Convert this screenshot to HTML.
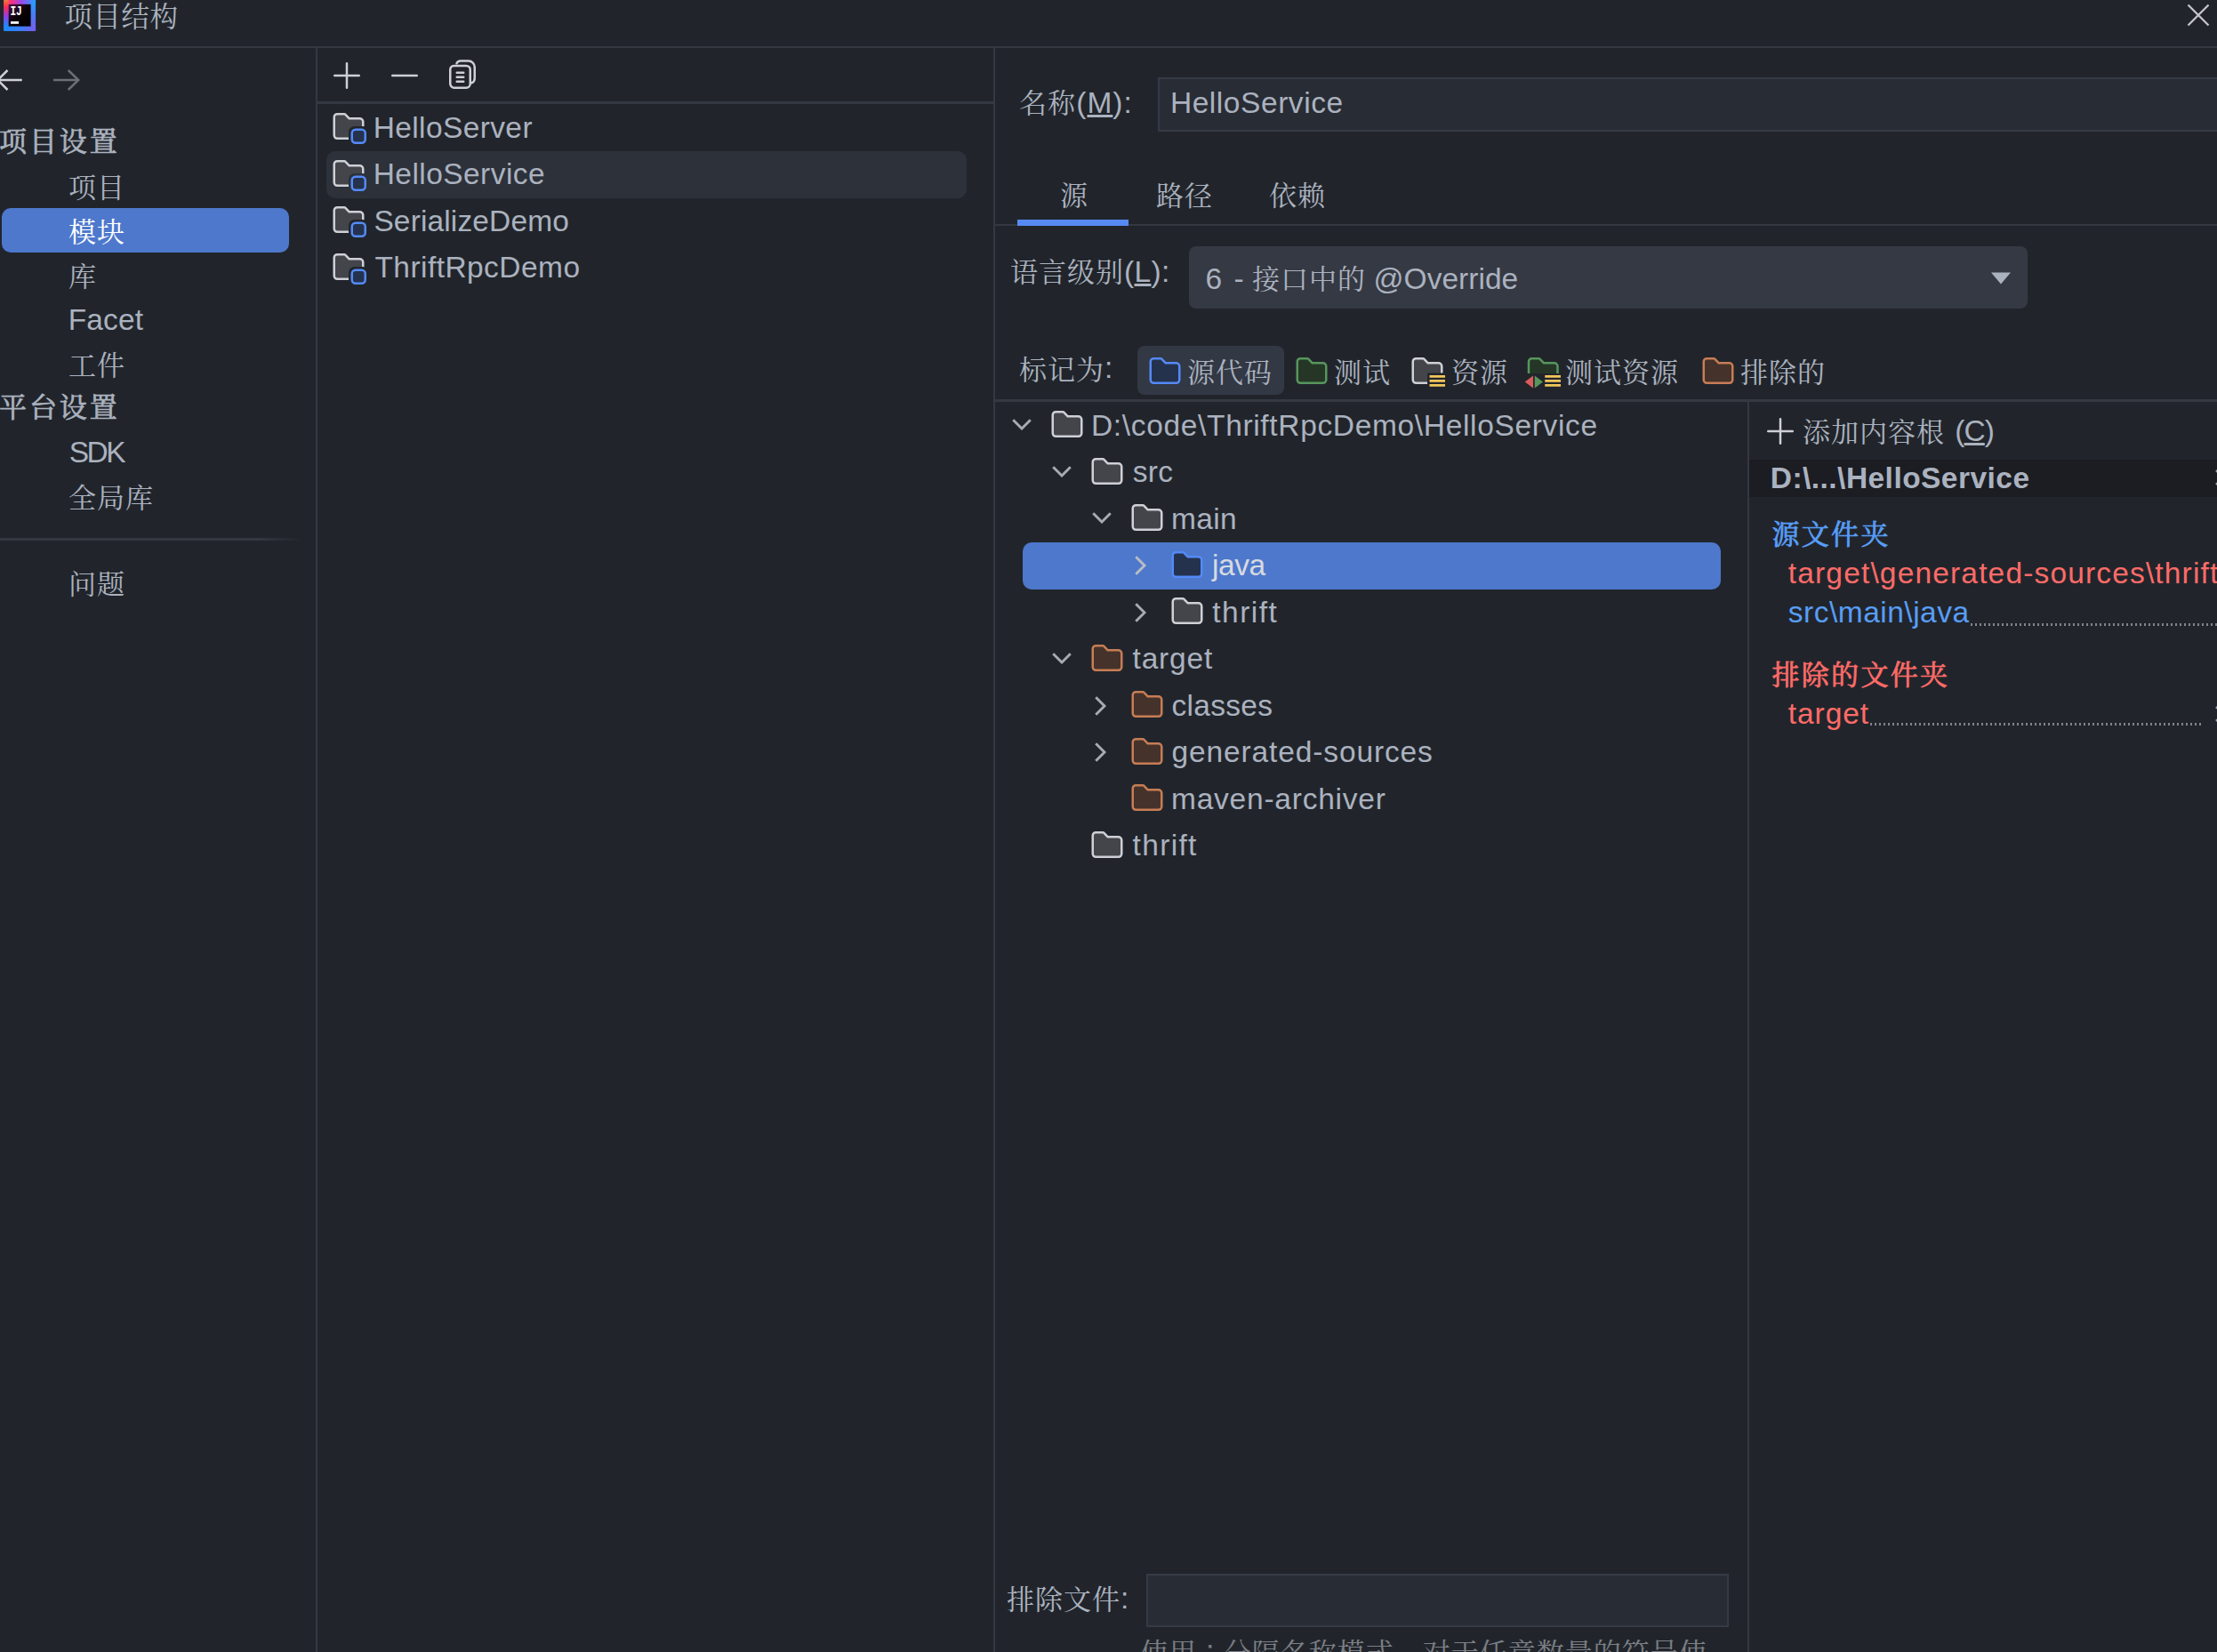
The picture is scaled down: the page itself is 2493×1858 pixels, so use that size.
<!DOCTYPE html>
<html lang="zh-CN"><head><meta charset="utf-8"><title>项目结构</title>
<style>
html,body{margin:0;padding:0}
body{width:2493px;height:1858px;overflow:hidden;background:#21252B;color:#ABB2BF;position:relative;
 font-family:"Liberation Sans","Noto Serif CJK SC",sans-serif;font-size:32px;}
.ic{position:absolute;overflow:visible}
.t{position:absolute;white-space:pre;line-height:40px;height:40px}
.zh{font-size:31px;letter-spacing:1px;position:relative;top:1.5px}
.fb{-webkit-text-stroke:0.75px currentColor;letter-spacing:2.3px}
.sh .fb{letter-spacing:2.9px}
.en{font-size:33.5px}
.b{font-weight:bold}
.r{position:absolute}
.hl{position:absolute;background:#333841}
u{text-decoration-thickness:2.6px;text-underline-offset:2.4px}
</style></head><body>

<div class="hl" style="left:0;top:52px;width:2493px;height:2px"></div>
<svg class="ic" style="left:4px;top:-1.3px" width="36.2" height="36" viewBox="0 0 36 36">
<defs>
<linearGradient id="gt" x1="0" y1="0" x2="1" y2="0"><stop offset="0" stop-color="#FDA40F"/><stop offset="0.22" stop-color="#FF2D7A"/><stop offset="0.55" stop-color="#9A48EA"/><stop offset="1" stop-color="#1FA6FF"/></linearGradient>
<linearGradient id="gl" x1="0" y1="0" x2="0" y2="1"><stop offset="0" stop-color="#FC801D"/><stop offset="0.25" stop-color="#FE2857"/><stop offset="0.55" stop-color="#8A42E8"/><stop offset="0.85" stop-color="#1A8CFF"/></linearGradient>
<linearGradient id="gb" x1="0" y1="0" x2="1" y2="0"><stop offset="0" stop-color="#1A8CFF"/><stop offset="0.55" stop-color="#3D7CF5"/><stop offset="1" stop-color="#7B5CF0"/></linearGradient>
<linearGradient id="gr" x1="0" y1="0" x2="0" y2="1"><stop offset="0" stop-color="#1FA6FF"/><stop offset="0.5" stop-color="#4A7BF5"/><stop offset="1" stop-color="#7B5CF0"/></linearGradient>
<linearGradient id="gi" x1="0" y1="0" x2="1" y2="1"><stop offset="0" stop-color="#4A0F45"/><stop offset="0.5" stop-color="#0A0208"/><stop offset="1" stop-color="#000"/></linearGradient>
</defs>
<rect x="0.3" y="0.3" width="35.4" height="35.4" fill="#5A5CE6"/>
<polygon points="0,0 36,0 30,6 6,6" fill="url(#gt)"/>
<polygon points="0,0 6,6 6,30 0,36" fill="url(#gl)"/>
<polygon points="0,36 6,30 30,30 36,36" fill="url(#gb)"/>
<polygon points="36,0 36,36 30,30 30,6" fill="url(#gr)"/>
<rect x="5.6" y="5.8" width="24.9" height="24.8" fill="url(#gi)"/>
<rect x="7.9" y="25.1" width="9.1" height="2.7" fill="#fff"/>
<text x="7.3" y="18.2" font-family="Liberation Mono, monospace" font-weight="bold" font-size="14.2" fill="#fff" textLength="13.4" lengthAdjust="spacingAndGlyphs">IJ</text>
</svg>
<div class="t" style="left:72.5px;top:-0.6px;font-size:31.5px;letter-spacing:0.5px">项目结构</div>
<svg class="ic" style="left:2456px;top:1px" width="32" height="32" viewBox="0 0 32 32"><path d="M4.5 4.5L27.5 27.5M27.5 4.5L4.5 27.5" stroke="#C3C5C9" stroke-width="2.3" fill="none"/></svg>
<div class="hl" style="left:354.6px;top:54px;width:2.6px;height:1804px"></div>
<svg class="ic" style="left:-9px;top:70px" width="40" height="40" viewBox="0 0 16 16"><path d="M13.5 8H2.7M7 3.6L2.6 8L7 12.4" fill="none" stroke="#CED0D6" stroke-width="1"/></svg>
<svg class="ic" style="left:56px;top:70px" width="40" height="40" viewBox="0 0 16 16"><path d="M1.6 8H12.8M8.3 3.6L12.9 8L8.3 12.4" fill="none" stroke="#6C6F75" stroke-width="1"/></svg>
<div class="t sh" style="left:-1px;top:137.5px"><span class="zh fb">项目设置</span></div>
<div class="t" style="left:77px;top:189.5px"><span class="zh">项目</span></div>
<div class="r" style="left:2px;top:234.0px;width:322.8px;height:50px;border-radius:10px;background:#4D78CC"></div>
<div class="t" style="left:77px;top:239.5px;color:#fff"><span class="zh">模块</span></div>
<div class="t" style="left:77px;top:289.5px"><span class="zh">库</span></div>
<div class="t" style="left:76.7px;top:339.5px"><span class="en" style="letter-spacing:0.131px">Facet</span></div>
<div class="t" style="left:77px;top:389.5px"><span class="zh">工件</span></div>
<div class="t sh" style="left:-1px;top:436px"><span class="zh fb">平台设置</span></div>
<div class="t" style="left:77.7px;top:488.5px"><span class="en" style="letter-spacing:-2.518px">SDK</span></div>
<div class="t" style="left:77px;top:538px"><span class="zh">全局库</span></div>
<div class="r" style="left:0;top:605px;width:340px;height:3px;background:linear-gradient(90deg,#333841 0,#333841 85%,#21252B 100%)"></div>
<div class="t" style="left:77px;top:635px"><span class="zh">问题</span></div>
<svg class="ic" style="left:370px;top:65px" width="40" height="40" viewBox="0 0 16 16"><path d="M8 2.5V13.5M2.5 8H13.5" stroke="#CED0D6" stroke-width="1" stroke-linecap="round" fill="none"/></svg>
<svg class="ic" style="left:435px;top:65px" width="40" height="40" viewBox="0 0 16 16"><path d="M2.5 8H13.5" stroke="#CED0D6" stroke-width="1" stroke-linecap="round" fill="none"/></svg>
<svg class="ic" style="left:500px;top:64px" width="40" height="40" viewBox="0 0 16 16" fill="none" stroke="#CED0D6" stroke-linecap="round">
<path d="M5.4 2.9C5.7 2.2 6.3 1.8 7.1 1.8H10.7A2.8 2.8 0 0 1 13.5 4.6V9.7A2.1 2.1 0 0 1 12.1 11.7"/>
<rect x="2.5" y="3.95" width="9" height="9.95" rx="1.8"/>
<path d="M5.5 7.05H8.5M5.5 9.05H8.5M5.5 11.05H8.5"/></svg>
<div class="hl" style="left:357px;top:114px;width:760.5px;height:3.2px"></div>
<div class="hl" style="left:1116.8px;top:54px;width:2.4px;height:1804px"></div>
<svg class="ic" style="left:371.7px;top:122.3px" width="40" height="40" viewBox="0 0 16 16" ><path d="M8.10584 4.34613L8.25344 4.5H8.46667H13C13.8284 4.5 14.5 5.17157 14.5 6V12.1333C14.5 12.9529 13.8359 13.5 13.1 13.5H2.9C2.16409 13.5 1.5 12.9529 1.5 12.1333V3.86667C1.5 3.04707 2.16409 2.5 2.9 2.5H6.11923C6.25536 2.5 6.38561 2.55548 6.47986 2.65374L8.10584 4.34613Z" fill="#43454A" stroke="#CED0D6"/><rect x="8" y="8" width="9" height="9" rx="2.6" fill="#21252B"/><rect x="9.5" y="9.5" width="6" height="6" rx="1.6" fill="#25324D" stroke="#548AF7"/></svg>
<div class="t" style="left:419.7px;top:123.5px"><span class="en" style="letter-spacing:0.385px">HelloServer</span></div>
<div class="r" style="left:367px;top:170.0px;width:720px;height:52.5px;border-radius:10px;background:#2C313A"></div>
<svg class="ic" style="left:371.7px;top:174.8px" width="40" height="40" viewBox="0 0 16 16" ><path d="M8.10584 4.34613L8.25344 4.5H8.46667H13C13.8284 4.5 14.5 5.17157 14.5 6V12.1333C14.5 12.9529 13.8359 13.5 13.1 13.5H2.9C2.16409 13.5 1.5 12.9529 1.5 12.1333V3.86667C1.5 3.04707 2.16409 2.5 2.9 2.5H6.11923C6.25536 2.5 6.38561 2.55548 6.47986 2.65374L8.10584 4.34613Z" fill="#43454A" stroke="#CED0D6"/><rect x="8" y="8" width="9" height="9" rx="2.6" fill="#2C313A"/><rect x="9.5" y="9.5" width="6" height="6" rx="1.6" fill="#25324D" stroke="#548AF7"/></svg>
<div class="t" style="left:419.7px;top:176.0px"><span class="en" style="letter-spacing:0.444px">HelloService</span></div>
<svg class="ic" style="left:371.7px;top:227.3px" width="40" height="40" viewBox="0 0 16 16" ><path d="M8.10584 4.34613L8.25344 4.5H8.46667H13C13.8284 4.5 14.5 5.17157 14.5 6V12.1333C14.5 12.9529 13.8359 13.5 13.1 13.5H2.9C2.16409 13.5 1.5 12.9529 1.5 12.1333V3.86667C1.5 3.04707 2.16409 2.5 2.9 2.5H6.11923C6.25536 2.5 6.38561 2.55548 6.47986 2.65374L8.10584 4.34613Z" fill="#43454A" stroke="#CED0D6"/><rect x="8" y="8" width="9" height="9" rx="2.6" fill="#21252B"/><rect x="9.5" y="9.5" width="6" height="6" rx="1.6" fill="#25324D" stroke="#548AF7"/></svg>
<div class="t" style="left:420.4px;top:228.5px"><span class="en" style="letter-spacing:0.133px">SerializeDemo</span></div>
<svg class="ic" style="left:371.7px;top:279.8px" width="40" height="40" viewBox="0 0 16 16" ><path d="M8.10584 4.34613L8.25344 4.5H8.46667H13C13.8284 4.5 14.5 5.17157 14.5 6V12.1333C14.5 12.9529 13.8359 13.5 13.1 13.5H2.9C2.16409 13.5 1.5 12.9529 1.5 12.1333V3.86667C1.5 3.04707 2.16409 2.5 2.9 2.5H6.11923C6.25536 2.5 6.38561 2.55548 6.47986 2.65374L8.10584 4.34613Z" fill="#43454A" stroke="#CED0D6"/><rect x="8" y="8" width="9" height="9" rx="2.6" fill="#21252B"/><rect x="9.5" y="9.5" width="6" height="6" rx="1.6" fill="#25324D" stroke="#548AF7"/></svg>
<div class="t" style="left:421.4px;top:281.0px"><span class="en" style="letter-spacing:0.449px">ThriftRpcDemo</span></div>
<div class="t" style="left:1146px;top:94px"><span class="zh">名称</span></div>
<div class="t" style="left:1210.3px;top:96px"><span class="en" style="letter-spacing:0.994px">(<u>M</u>):</span></div>
<div class="r" style="left:1302px;top:86.8px;width:1300px;height:57.2px;background:#282C34;border:2px solid #353A45"></div>
<div class="t" style="left:1315.9px;top:96px"><span class="en" style="letter-spacing:0.562px">HelloService</span></div>
<div class="t" style="left:1192px;top:198.5px"><span class="zh">源</span></div>
<div class="t" style="left:1300px;top:198.5px"><span class="zh">路径</span></div>
<div class="t" style="left:1427px;top:198.5px"><span class="zh">依赖</span></div>
<div class="hl" style="left:1119px;top:251.7px;width:1374px;height:2px"></div>
<div class="r" style="left:1144px;top:247px;width:125px;height:7px;background:#568AF2"></div>
<div class="t" style="left:1136px;top:284px"><span class="zh">语言级别</span></div>
<div class="t" style="left:1264px;top:286px"><span class="en" style="letter-spacing:0.352px">(<u>L</u>):</span></div>
<div class="r" style="left:1337px;top:276.8px;width:942.5px;height:70px;border-radius:8px;background:#353943"></div>
<div class="t" style="left:1355.6px;top:293.7px"><span class="en" style="letter-spacing:1.931px">6 -</span></div>
<div class="t" style="left:1408px;top:292.2px"><span class="zh">接口中的</span></div>
<div class="t" style="left:1544.6px;top:293.7px"><span class="en" style="letter-spacing:0.021px">@Override</span></div>
<svg class="ic" style="left:2238px;top:305px" width="24" height="16" viewBox="0 0 24 16"><path d="M1 1.5H23L12 14.5Z" fill="#ABB2BF"/></svg>
<div class="t" style="left:1146px;top:394px"><span class="zh">标记为</span><span class="en" style="letter-spacing:0.600px">:</span></div>
<div class="r" style="left:1279px;top:389px;width:165px;height:55px;border-radius:8px;background:#323844"></div>
<svg class="ic" style="left:1290px;top:397px" width="40" height="40" viewBox="0 0 16 16" ><path d="M8.10584 4.34613L8.25344 4.5H8.46667H13C13.8284 4.5 14.5 5.17157 14.5 6V12.1333C14.5 12.9529 13.8359 13.5 13.1 13.5H2.9C2.16409 13.5 1.5 12.9529 1.5 12.1333V3.86667C1.5 3.04707 2.16409 2.5 2.9 2.5H6.11923C6.25536 2.5 6.38561 2.55548 6.47986 2.65374L8.10584 4.34613Z" fill="#25324D" stroke="#548AF7"/></svg>
<div class="t" style="left:1335px;top:397.3px"><span class="zh">源代码</span></div>
<svg class="ic" style="left:1454.5px;top:397px" width="40" height="40" viewBox="0 0 16 16" ><path d="M8.10584 4.34613L8.25344 4.5H8.46667H13C13.8284 4.5 14.5 5.17157 14.5 6V12.1333C14.5 12.9529 13.8359 13.5 13.1 13.5H2.9C2.16409 13.5 1.5 12.9529 1.5 12.1333V3.86667C1.5 3.04707 2.16409 2.5 2.9 2.5H6.11923C6.25536 2.5 6.38561 2.55548 6.47986 2.65374L8.10584 4.34613Z" fill="#253627" stroke="#57965C"/></svg>
<div class="t" style="left:1500px;top:397.3px"><span class="zh">测试</span></div>
<svg class="ic" style="left:1584.5px;top:397px" width="40" height="40" viewBox="0 0 16 16" ><path d="M8.10584 4.34613L8.25344 4.5H8.46667H13C13.8284 4.5 14.5 5.17157 14.5 6V12.1333C14.5 12.9529 13.8359 13.5 13.1 13.5H2.9C2.16409 13.5 1.5 12.9529 1.5 12.1333V3.86667C1.5 3.04707 2.16409 2.5 2.9 2.5H6.11923C6.25536 2.5 6.38561 2.55548 6.47986 2.65374L8.10584 4.34613Z" fill="#43454A" stroke="#CED0D6"/><rect x="8" y="9" width="9" height="7" fill="#21252B"/><path d="M9 10.5H16M9 12.5H16M9 14.5H16" stroke="#F2C55C" stroke-width="1.1" fill="none"/></svg>
<div class="t" style="left:1632px;top:397.3px"><span class="zh">资源</span></div>
<svg class="ic" style="left:1713px;top:397px" width="40" height="40" viewBox="0 0 16 16" ><path transform="translate(0.9,0)" d="M8.10584 4.34613L8.25344 4.5H8.46667H13C13.8284 4.5 14.5 5.17157 14.5 6V12.1333C14.5 12.9529 13.8359 13.5 13.1 13.5H2.9C2.16409 13.5 1.5 12.9529 1.5 12.1333V3.86667C1.5 3.04707 2.16409 2.5 2.9 2.5H6.11923C6.25536 2.5 6.38561 2.55548 6.47986 2.65374L8.10584 4.34613Z" fill="#253627" stroke="#57965C"/><rect x="0" y="9.2" width="18" height="7.5" fill="#21252B"/><path d="M4.4 10.2V15.8L0.7 13Z" fill="#DB5C5C"/><path d="M5.1 10.2V15.8L8.8 13Z" fill="#57965C"/><path d="M9.7 10.5H16.8M9.7 12.5H16.8M9.7 14.5H16.8" stroke="#F2C55C" stroke-width="1.1" fill="none"/></svg>
<div class="t" style="left:1760px;top:397.3px"><span class="zh">测试资源</span></div>
<svg class="ic" style="left:1911.5px;top:397px" width="40" height="40" viewBox="0 0 16 16" ><path d="M8.10584 4.34613L8.25344 4.5H8.46667H13C13.8284 4.5 14.5 5.17157 14.5 6V12.1333C14.5 12.9529 13.8359 13.5 13.1 13.5H2.9C2.16409 13.5 1.5 12.9529 1.5 12.1333V3.86667C1.5 3.04707 2.16409 2.5 2.9 2.5H6.11923C6.25536 2.5 6.38561 2.55548 6.47986 2.65374L8.10584 4.34613Z" fill="#45322B" stroke="#C77D55"/></svg>
<div class="t" style="left:1957px;top:397.3px"><span class="zh">排除的</span></div>
<div class="hl" style="left:1119px;top:449px;width:1374px;height:3px"></div>
<div class="hl" style="left:1965px;top:452px;width:2.3px;height:1406px"></div>
<svg class="ic" style="left:1128.8px;top:457.3px" width="40" height="40" viewBox="0 0 16 16" ><path d="M4.1 6.1L8 10L11.9 6.1" fill="none" stroke="#A8ABB0" stroke-width="1.15"/></svg>
<svg class="ic" style="left:1179.7px;top:457.0px" width="40" height="40" viewBox="0 0 16 16" ><path d="M8.10584 4.34613L8.25344 4.5H8.46667H13C13.8284 4.5 14.5 5.17157 14.5 6V12.1333C14.5 12.9529 13.8359 13.5 13.1 13.5H2.9C2.16409 13.5 1.5 12.9529 1.5 12.1333V3.86667C1.5 3.04707 2.16409 2.5 2.9 2.5H6.11923C6.25536 2.5 6.38561 2.55548 6.47986 2.65374L8.10584 4.34613Z" fill="#43454A" stroke="#CED0D6"/></svg>
<div class="t" style="left:1227px;top:458.90000000000003px"><span class="en" style="letter-spacing:0.660px">D:\code\ThriftRpcDemo\HelloService</span></div>
<svg class="ic" style="left:1174.0px;top:509.8px" width="40" height="40" viewBox="0 0 16 16" ><path d="M4.1 6.1L8 10L11.9 6.1" fill="none" stroke="#A8ABB0" stroke-width="1.15"/></svg>
<svg class="ic" style="left:1224.9px;top:509.5px" width="40" height="40" viewBox="0 0 16 16" ><path d="M8.10584 4.34613L8.25344 4.5H8.46667H13C13.8284 4.5 14.5 5.17157 14.5 6V12.1333C14.5 12.9529 13.8359 13.5 13.1 13.5H2.9C2.16409 13.5 1.5 12.9529 1.5 12.1333V3.86667C1.5 3.04707 2.16409 2.5 2.9 2.5H6.11923C6.25536 2.5 6.38561 2.55548 6.47986 2.65374L8.10584 4.34613Z" fill="#43454A" stroke="#CED0D6"/></svg>
<div class="t" style="left:1273.7px;top:511.40000000000003px"><span class="en" style="letter-spacing:0.347px">src</span></div>
<svg class="ic" style="left:1219.2px;top:562.3px" width="40" height="40" viewBox="0 0 16 16" ><path d="M4.1 6.1L8 10L11.9 6.1" fill="none" stroke="#A8ABB0" stroke-width="1.15"/></svg>
<svg class="ic" style="left:1270.1000000000001px;top:562.0px" width="40" height="40" viewBox="0 0 16 16" ><path d="M8.10584 4.34613L8.25344 4.5H8.46667H13C13.8284 4.5 14.5 5.17157 14.5 6V12.1333C14.5 12.9529 13.8359 13.5 13.1 13.5H2.9C2.16409 13.5 1.5 12.9529 1.5 12.1333V3.86667C1.5 3.04707 2.16409 2.5 2.9 2.5H6.11923C6.25536 2.5 6.38561 2.55548 6.47986 2.65374L8.10584 4.34613Z" fill="#43454A" stroke="#CED0D6"/></svg>
<div class="t" style="left:1317px;top:563.9px"><span class="en" style="letter-spacing:0.340px">main</span></div>
<div class="r" style="left:1149.5px;top:609.8px;width:785px;height:52.8px;border-radius:10px;background:#4D78CC"></div>
<svg class="ic" style="left:1261.8000000000002px;top:616.4px" width="40" height="40" viewBox="0 0 16 16" ><path d="M6.1 4.1L10 8L6.1 11.9" fill="none" stroke="#B9BCC2" stroke-width="1.15"/></svg>
<svg class="ic" style="left:1315.3000000000002px;top:614.5px" width="40" height="40" viewBox="0 0 16 16" ><path d="M8.10584 4.34613L8.25344 4.5H8.46667H13C13.8284 4.5 14.5 5.17157 14.5 6V12.1333C14.5 12.9529 13.8359 13.5 13.1 13.5H2.9C2.16409 13.5 1.5 12.9529 1.5 12.1333V3.86667C1.5 3.04707 2.16409 2.5 2.9 2.5H6.11923C6.25536 2.5 6.38561 2.55548 6.47986 2.65374L8.10584 4.34613Z" fill="#25324D" stroke="#548AF7"/></svg>
<div class="t" style="left:1362.9px;top:616.4px;color:#D7DAE0"><span class="en" style="letter-spacing:-0.408px">java</span></div>
<svg class="ic" style="left:1261.8000000000002px;top:668.9px" width="40" height="40" viewBox="0 0 16 16" ><path d="M6.1 4.1L10 8L6.1 11.9" fill="none" stroke="#A8ABB0" stroke-width="1.15"/></svg>
<svg class="ic" style="left:1315.3000000000002px;top:667.0px" width="40" height="40" viewBox="0 0 16 16" ><path d="M8.10584 4.34613L8.25344 4.5H8.46667H13C13.8284 4.5 14.5 5.17157 14.5 6V12.1333C14.5 12.9529 13.8359 13.5 13.1 13.5H2.9C2.16409 13.5 1.5 12.9529 1.5 12.1333V3.86667C1.5 3.04707 2.16409 2.5 2.9 2.5H6.11923C6.25536 2.5 6.38561 2.55548 6.47986 2.65374L8.10584 4.34613Z" fill="#43454A" stroke="#CED0D6"/></svg>
<div class="t" style="left:1363.2px;top:668.9px"><span class="en" style="letter-spacing:1.511px">thrift</span></div>
<svg class="ic" style="left:1174.0px;top:719.8px" width="40" height="40" viewBox="0 0 16 16" ><path d="M4.1 6.1L8 10L11.9 6.1" fill="none" stroke="#A8ABB0" stroke-width="1.15"/></svg>
<svg class="ic" style="left:1224.9px;top:719.5px" width="40" height="40" viewBox="0 0 16 16" ><path d="M8.10584 4.34613L8.25344 4.5H8.46667H13C13.8284 4.5 14.5 5.17157 14.5 6V12.1333C14.5 12.9529 13.8359 13.5 13.1 13.5H2.9C2.16409 13.5 1.5 12.9529 1.5 12.1333V3.86667C1.5 3.04707 2.16409 2.5 2.9 2.5H6.11923C6.25536 2.5 6.38561 2.55548 6.47986 2.65374L8.10584 4.34613Z" fill="#45322B" stroke="#C77D55"/></svg>
<div class="t" style="left:1273.5px;top:721.4px"><span class="en" style="letter-spacing:0.829px">target</span></div>
<svg class="ic" style="left:1216.6000000000001px;top:773.9px" width="40" height="40" viewBox="0 0 16 16" ><path d="M6.1 4.1L10 8L6.1 11.9" fill="none" stroke="#A8ABB0" stroke-width="1.15"/></svg>
<svg class="ic" style="left:1270.1000000000001px;top:772.0px" width="40" height="40" viewBox="0 0 16 16" ><path d="M8.10584 4.34613L8.25344 4.5H8.46667H13C13.8284 4.5 14.5 5.17157 14.5 6V12.1333C14.5 12.9529 13.8359 13.5 13.1 13.5H2.9C2.16409 13.5 1.5 12.9529 1.5 12.1333V3.86667C1.5 3.04707 2.16409 2.5 2.9 2.5H6.11923C6.25536 2.5 6.38561 2.55548 6.47986 2.65374L8.10584 4.34613Z" fill="#45322B" stroke="#C77D55"/></svg>
<div class="t" style="left:1317.5px;top:773.9px"><span class="en" style="letter-spacing:0.308px">classes</span></div>
<svg class="ic" style="left:1216.6000000000001px;top:826.4px" width="40" height="40" viewBox="0 0 16 16" ><path d="M6.1 4.1L10 8L6.1 11.9" fill="none" stroke="#A8ABB0" stroke-width="1.15"/></svg>
<svg class="ic" style="left:1270.1000000000001px;top:824.5px" width="40" height="40" viewBox="0 0 16 16" ><path d="M8.10584 4.34613L8.25344 4.5H8.46667H13C13.8284 4.5 14.5 5.17157 14.5 6V12.1333C14.5 12.9529 13.8359 13.5 13.1 13.5H2.9C2.16409 13.5 1.5 12.9529 1.5 12.1333V3.86667C1.5 3.04707 2.16409 2.5 2.9 2.5H6.11923C6.25536 2.5 6.38561 2.55548 6.47986 2.65374L8.10584 4.34613Z" fill="#45322B" stroke="#C77D55"/></svg>
<div class="t" style="left:1317.5px;top:826.4px"><span class="en" style="letter-spacing:0.876px">generated-sources</span></div>
<svg class="ic" style="left:1270.1000000000001px;top:877.0px" width="40" height="40" viewBox="0 0 16 16" ><path d="M8.10584 4.34613L8.25344 4.5H8.46667H13C13.8284 4.5 14.5 5.17157 14.5 6V12.1333C14.5 12.9529 13.8359 13.5 13.1 13.5H2.9C2.16409 13.5 1.5 12.9529 1.5 12.1333V3.86667C1.5 3.04707 2.16409 2.5 2.9 2.5H6.11923C6.25536 2.5 6.38561 2.55548 6.47986 2.65374L8.10584 4.34613Z" fill="#45322B" stroke="#C77D55"/></svg>
<div class="t" style="left:1317px;top:878.9px"><span class="en" style="letter-spacing:0.769px">maven-archiver</span></div>
<svg class="ic" style="left:1224.9px;top:929.5px" width="40" height="40" viewBox="0 0 16 16" ><path d="M8.10584 4.34613L8.25344 4.5H8.46667H13C13.8284 4.5 14.5 5.17157 14.5 6V12.1333C14.5 12.9529 13.8359 13.5 13.1 13.5H2.9C2.16409 13.5 1.5 12.9529 1.5 12.1333V3.86667C1.5 3.04707 2.16409 2.5 2.9 2.5H6.11923C6.25536 2.5 6.38561 2.55548 6.47986 2.65374L8.10584 4.34613Z" fill="#43454A" stroke="#CED0D6"/></svg>
<div class="t" style="left:1273.5px;top:931.4px"><span class="en" style="letter-spacing:1.351px">thrift</span></div>
<svg class="ic" style="left:1982px;top:465px" width="40" height="40" viewBox="0 0 16 16"><path d="M8 2.5V13.5M2.5 8H13.5" stroke="#CED0D6" stroke-width="1" stroke-linecap="round" fill="none"/></svg>
<div class="t" style="left:2027px;top:464px"><span class="zh">添加内容根</span></div>
<div class="t" style="left:2198.2px;top:465.3px"><span class="en" style="letter-spacing:-0.874px">(<u>C</u>)</span></div>
<div class="r" style="left:1967px;top:517px;width:526px;height:41.5px;background:#1B1D23"></div>
<div class="t" style="left:1990.8px;top:518px"><span class="en b" style="letter-spacing:0.457px">D:\...\HelloService</span></div>
<div class="t" style="left:1992.5px;top:579px;color:#589DF6"><span class="zh fb">源文件夹</span></div>
<div class="t" style="left:2010.8px;top:625px;color:#FF6B68"><span class="en" style="letter-spacing:1.158px">target\generated-sources\thrift</span></div>
<div class="t" style="left:2010.8px;top:669px;color:#589DF6"><span class="en" style="letter-spacing:0.500px">src\main\java</span></div>
<div class="r" style="left:2216px;top:701px;width:277px;height:2.5px;background:repeating-linear-gradient(90deg,#7F8288 0,#7F8288 2.5px,transparent 2.5px,transparent 5px)"></div>
<div class="t" style="left:1992.5px;top:737px;color:#FF6B68"><span class="zh fb">排除的文件夹</span></div>
<div class="t" style="left:2010.8px;top:783px;color:#FF6B68"><span class="en" style="letter-spacing:0.929px">target</span></div>
<div class="r" style="left:2103px;top:813px;width:372px;height:2.5px;background:repeating-linear-gradient(90deg,#7F8288 0,#7F8288 2.5px,transparent 2.5px,transparent 5px)"></div>
<svg class="ic" style="left:2490px;top:527px" width="20" height="20" viewBox="0 0 20 20"><path d="M2 2L18 18M18 2L2 18" stroke="#9DA0A8" stroke-width="2.5" fill="none"/></svg>
<svg class="ic" style="left:2490px;top:793px" width="20" height="20" viewBox="0 0 20 20"><path d="M2 2L18 18M18 2L2 18" stroke="#9DA0A8" stroke-width="2.5" fill="none"/></svg>
<div class="t" style="left:1132px;top:1777.5px"><span class="zh">排除文件</span><span class="en" style="letter-spacing:0.600px">:</span></div>
<div class="r" style="left:1288.8px;top:1769.5px;width:651.7px;height:56.3px;background:#282C34;border:2px solid #353A45"></div>
<div class="t" style="left:1282px;top:1837.4px;color:#7C7F85;white-space:normal;width:648px;height:auto"><span class="zh">使用</span><span class="en" style="letter-spacing:0.600px"> ; </span><span class="zh">分隔名称模式，对于任意数量的符号使用</span><span class="en" style="letter-spacing:0.600px"> *</span><span class="zh">，对于一个符号使用</span><span class="en" style="letter-spacing:0.600px"> ?</span><span class="zh">。</span></div>
</body></html>
